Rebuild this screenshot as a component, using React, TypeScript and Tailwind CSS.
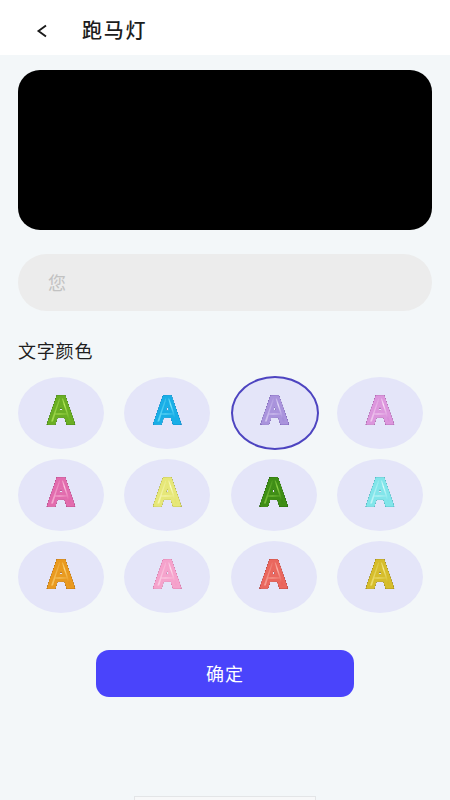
const cjk = "font-['Inter','Noto_Sans_CJK_SC',sans-serif]";

const letters = [
  { fill: "bg-[linear-gradient(120deg,#6fb52a_25%,#b6e85a_50%,#6fb52a_75%)] [-webkit-text-stroke:3px_#6aae24]", edge: "[filter:drop-shadow(0_0_0.7px_#2f6a10)_drop-shadow(0_0_0.4px_#2f6a10)_drop-shadow(0.4px_0.8px_0.3px_#2b5f10)]" },
  { fill: "bg-[linear-gradient(120deg,#18aee8_25%,#7ce6fa_50%,#18aee8_75%)] [-webkit-text-stroke:3px_#1aaee6]", edge: "[filter:drop-shadow(0_0_0.7px_#0f7fc4)_drop-shadow(0_0_0.4px_#0f7fc4)_drop-shadow(0.4px_0.8px_0.3px_#0b5f9c)]" },
  { fill: "bg-[linear-gradient(120deg,#a48dda_25%,#e2d8f8_50%,#a48dda_75%)] [-webkit-text-stroke:3px_#a993dc]", edge: "[filter:drop-shadow(0_0_0.7px_#6f55ad)_drop-shadow(0_0_0.4px_#6f55ad)_drop-shadow(0.4px_0.8px_0.3px_#5b4596)]" },
  { fill: "bg-[linear-gradient(120deg,#d88fda_25%,#f8dcf5_50%,#d88fda_75%)] [-webkit-text-stroke:3px_#dc96dd]", edge: "[filter:drop-shadow(0_0_0.7px_#9c5299)_drop-shadow(0_0_0.4px_#9c5299)_drop-shadow(0.4px_0.8px_0.3px_#7c4488)]" },
  { fill: "bg-[linear-gradient(120deg,#e268ab_25%,#fbc4e0_50%,#e268ab_75%)] [-webkit-text-stroke:3px_#e26cae]", edge: "[filter:drop-shadow(0_0_0.7px_#a83a7c)_drop-shadow(0_0_0.4px_#a83a7c)_drop-shadow(0.4px_0.8px_0.3px_#8e2b68)]" },
  { fill: "bg-[linear-gradient(120deg,#e4e570_25%,#fcfcc8_50%,#e4e570_75%)] [-webkit-text-stroke:3px_#e6e778]", edge: "[filter:drop-shadow(0_0_0.7px_#a5a636)_drop-shadow(0_0_0.4px_#a5a636)_drop-shadow(0.4px_0.8px_0.3px_#85862c)]" },
  { fill: "bg-[linear-gradient(120deg,#3c8a14_25%,#8ed248_50%,#3c8a14_75%)] [-webkit-text-stroke:3px_#3f8e16]", edge: "[filter:drop-shadow(0_0_0.7px_#1c5a0a)_drop-shadow(0_0_0.4px_#1c5a0a)_drop-shadow(0.4px_0.8px_0.3px_#123f07)]" },
  { fill: "bg-[linear-gradient(120deg,#7fe4ea_25%,#d8fbfb_50%,#7fe4ea_75%)] [-webkit-text-stroke:3px_#82e5ea]", edge: "[filter:drop-shadow(0_0_0.7px_#3ba8b5)_drop-shadow(0_0_0.4px_#3ba8b5)_drop-shadow(0.4px_0.8px_0.3px_#2f8f9c)]" },
  { fill: "bg-[linear-gradient(120deg,#e8951c_25%,#fbd67c_50%,#e8951c_75%)] [-webkit-text-stroke:3px_#e99a20]", edge: "[filter:drop-shadow(0_0_0.7px_#a86008)_drop-shadow(0_0_0.4px_#a86008)_drop-shadow(0.4px_0.8px_0.3px_#7f4a08)]" },
  { fill: "bg-[linear-gradient(120deg,#f59fca_25%,#fcdcec_50%,#f59fca_75%)] [-webkit-text-stroke:3px_#f5a3cc]", edge: "[filter:drop-shadow(0_0_0.7px_#cf6a9f)_drop-shadow(0_0_0.4px_#cf6a9f)_drop-shadow(0.4px_0.8px_0.3px_#b5558a)]" },
  { fill: "bg-[linear-gradient(120deg,#e9635a_25%,#fab4a8_50%,#e9635a_75%)] [-webkit-text-stroke:3px_#ea675e]", edge: "[filter:drop-shadow(0_0_0.7px_#aa3532)_drop-shadow(0_0_0.4px_#aa3532)_drop-shadow(0.4px_0.8px_0.3px_#8c2b2b)]" },
  { fill: "bg-[linear-gradient(120deg,#d4bb28_25%,#f5ea8c_50%,#d4bb28_75%)] [-webkit-text-stroke:3px_#d6bd2c]", edge: "[filter:drop-shadow(0_0_0.7px_#8a760f)_drop-shadow(0_0_0.4px_#8a760f)_drop-shadow(0.4px_0.8px_0.3px_#6b5a0c)]" },
];

export default function App() {
  return (
    <div className={`w-[450px] h-[800px] bg-[#f3f7f9] flex flex-col overflow-hidden ${cjk}`}>
      <header className="h-[55px] bg-white flex items-center pl-[36px] pt-[7px] shrink-0">
        <svg width="12" height="16" viewBox="0 0 12 16" fill="none" className="mr-[34px]">
          <path d="M10 2.5 L2.5 8 L10 13.5" stroke="#1a1a1a" strokeWidth="1.9" />
        </svg>
        <h1 className="text-[20px] leading-none font-medium text-[#1c1c1c] tracking-[1.7px]">跑马灯</h1>
      </header>

      <main className="flex flex-col px-[18px] flex-1 relative">
        <div className="mt-[15px] h-[160px] rounded-[22px] bg-black" />

        <div className="mt-[24px] h-[57px] rounded-[29px] bg-[#ececec] flex items-center pl-[30px] pt-[2px] text-[18px] text-[#c2c2c2]">
          您
        </div>

        <h2 className="mt-[29px] text-[18px] leading-[24px] text-[#1f1f1f] tracking-[0.8px]">文字颜色</h2>

        <div className="mt-[13px] w-[405px] grid grid-cols-[86px_86px_86px_86px] justify-between gap-y-[10px]">
          {letters.map((l, i) => (
            <div
              key={i}
              className={`rounded-[50%] bg-[#e4e5f9] flex items-center justify-center ${i === 2 ? "border-[2px] border-[#4d44c0] w-[88px] h-[74px] -my-[1px]" : "h-[72px]"}`}
            >
              <span
                className={`font-['Liberation_Sans',sans-serif] font-bold text-[36px] leading-none mb-[5px] bg-clip-text text-transparent ${l.fill} ${l.edge}`}
              >
                A
              </span>
            </div>
          ))}
        </div>

        <button className="mt-[37px] self-center w-[258px] h-[47px] rounded-[13px] bg-[#4a44fb] text-white text-[18px] tracking-[1px] pt-[1px] flex items-center justify-center">
          确定
        </button>

        <div className="absolute bottom-0 left-[134px] w-[182px] h-[4px] bg-[#f7f8f9] border border-b-0 border-[#e3e5e7]" />
      </main>
    </div>
  );
}
